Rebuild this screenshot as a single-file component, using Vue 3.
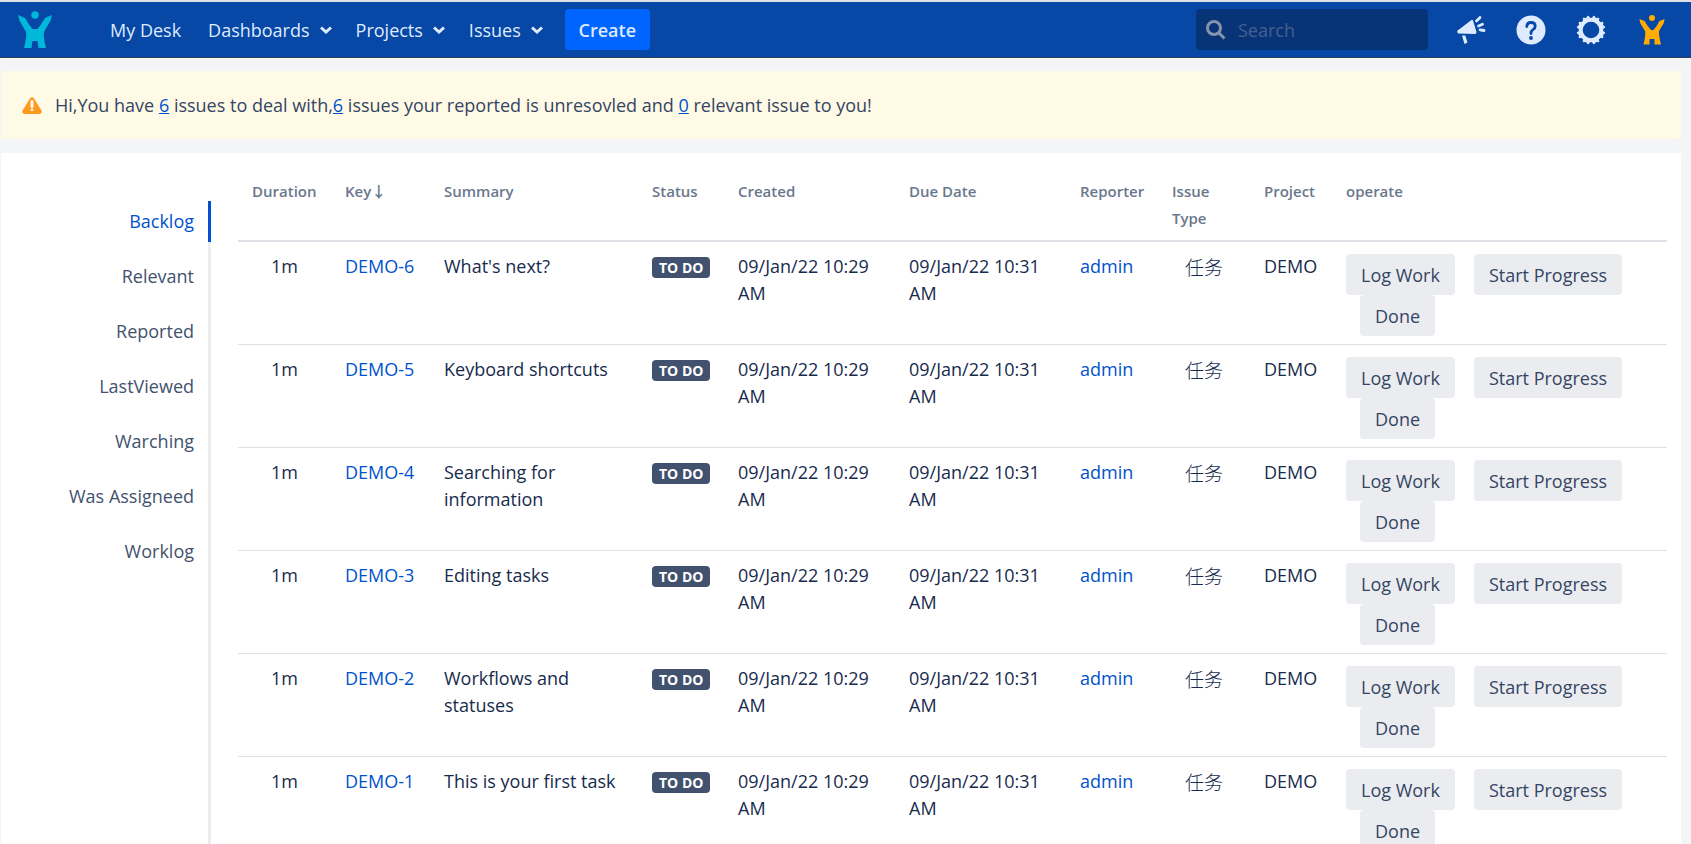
<script setup>
import { ref } from 'vue'

const search = ref('')
const menus = ['Dashboards', 'Projects', 'Issues']
const tabs = ['Backlog', 'Relevant', 'Reported', 'LastViewed', 'Warching', 'Was Assigneed', 'Worklog']
const activeTab = ref('Backlog')

const columns = [
  { key: 'duration', label: 'Duration' },
  { key: 'key', label: 'Key↓' },
  { key: 'summary', label: 'Summary' },
  { key: 'status', label: 'Status' },
  { key: 'created', label: 'Created' },
  { key: 'due', label: 'Due Date' },
  { key: 'reporter', label: 'Reporter' },
  { key: 'type', label: 'Issue Type' },
  { key: 'project', label: 'Project' },
  { key: 'operate', label: 'operate' },
]

const issues = [
  { key: 'DEMO-6', summary: "What's next?" },
  { key: 'DEMO-5', summary: 'Keyboard shortcuts' },
  { key: 'DEMO-4', summary: 'Searching for information' },
  { key: 'DEMO-3', summary: 'Editing tasks' },
  { key: 'DEMO-2', summary: 'Workflows and statuses' },
  { key: 'DEMO-1', summary: 'This is your first task' },
]
</script>

<template>
  <div class="page">
    <header class="topbar">
      <a class="logo" href="#" aria-label="Home">
        <svg viewBox="0 0 34 38" width="34" height="38">
          <circle cx="17" cy="4" r="3.700" />
          <path d="M0 4 L7 7 Q11 14 14.500 18 H19.500 Q23 14 27 7 L34 4 Q33 10 30 14 L26 21 Q25 25 28 37 H20.500 L19.500 30 H14.500 L13.500 37 H6 Q9 25 8 21 L4 14 Q1 10 0 4Z" />
        </svg>
      </a>
      <nav class="menu" aria-label="Main">
        <a href="#">My Desk</a>
        <button v-for="m in menus" :key="m" type="button" class="drop">
          {{ m }}
          <svg viewBox="0 0 12 8" width="12" height="8"><path d="M1 1.500 L6 6 L11 1.500" /></svg>
        </button>
      </nav>
      <button type="button" class="create">Create</button>
      <div class="search">
        <svg viewBox="0 0 20 20" width="20" height="20"><circle cx="8" cy="8" r="6.500" /><path d="M13 13 L18.500 18.500" /></svg>
        <input v-model="search" type="text" placeholder="Search" aria-label="Search">
      </div>
      <div class="tools">
        <button type="button" aria-label="Feedback">
          <svg viewBox="0 0 30 30" width="30" height="30">
            <path class="fill" d="M15.500 5 Q16.500 4.500 17 5.500 L20.500 17 Q20.500 19 19 19 L3 18.500 Q0.500 18 1.500 15.500 Q2 15 3 14.500Z" />
            <path class="fill" d="M6 20.500 H9.300 L11.500 27.500 L8.500 29Z" />
            <path class="ray" d="M20.500 6 L24 2.500 M22.500 11 L26.500 9.300 M24 14.800 L28 15.500" />
          </svg>
        </button>
        <button type="button" aria-label="Help">
          <svg viewBox="0 0 30 30" width="30" height="30">
            <circle class="fill" cx="15" cy="15" r="14.500" />
            <path class="mark" d="M10.800 11.500 Q11 7.500 15 7.500 Q19.200 7.500 19.200 11.300 Q19.200 13.300 17 14.600 Q15 15.800 15 18.500" />
            <circle class="dot" cx="15" cy="23" r="1.900" />
          </svg>
        </button>
        <button type="button" aria-label="Settings">
          <svg viewBox="0 0 30 30" width="30" height="30">
            <circle class="ring" cx="15" cy="15" r="10.300" />
            <g class="fill">
              <path v-for="n in 8" :key="n" d="M11 5 L11.700 1.200 Q12 0.500 13 0.800 L15 2 L17 0.800 Q18 0.500 18.300 1.200 L19 5Z" :transform="`rotate(${n * 45 + 22.5} 15 15)`" />
            </g>
          </svg>
        </button>
        <button type="button" class="profile" aria-label="Profile">
          <svg viewBox="0 0 26 30" width="26" height="30">
            <circle cx="13" cy="3" r="3" />
            <path d="M0.500 4 L5.500 6 Q9 12 12 15 H14.500 Q17.500 12 20.500 6 L25.500 4 Q25.500 8 23 11 L20 16 Q19.500 20 22 29.500 H15.500 V24 H10.500 V29.500 H4.500 Q7 20 6 16 L3 11 Q0.500 8 0.500 4Z" />
          </svg>
        </button>
      </div>
    </header>

    <main>
      <div class="notice" role="status">
        <svg viewBox="0 0 20 17" width="20" height="17">
          <path class="tri" d="M8 1.500 Q10 -1 12 1.500 L19.500 13.500 Q20.500 16.500 17.500 17 H2.500 Q-0.500 16.500 0.500 13.500Z" />
          <path class="bang" d="M10 4.500 V9.500" /><circle class="bang-dot" cx="10" cy="12.800" r="1.400" />
        </svg>
        <p>Hi,You have <a href="#">6</a> issues to deal with,<a href="#">6</a> issues your reported is unresovled and <a href="#">0</a> relevant issue to you!</p>
      </div>

      <section class="card">
        <nav class="tabs" aria-label="Issue lists">
          <a v-for="t in tabs" :key="t" href="#" :class="{ active: t === activeTab }" @click.prevent="activeTab = t">{{ t }}</a>
        </nav>
        <div class="content">
          <table>
            <colgroup><col v-for="c in columns" :key="c.key" :class="'w-' + c.key"></colgroup>
            <thead>
              <tr><th v-for="c in columns" :key="c.key" scope="col">{{ c.label }}</th></tr>
            </thead>
            <tbody>
              <tr v-for="i in issues" :key="i.key">
                <td class="center">1m</td>
                <td class="key"><a href="#">{{ i.key }}</a></td>
                <td>{{ i.summary }}</td>
                <td><span class="badge">TO DO</span></td>
                <td>09/Jan/22 10:29 AM</td>
                <td>09/Jan/22 10:31 AM</td>
                <td><a href="#">admin</a></td>
                <td class="type">任务</td>
                <td>DEMO</td>
                <td class="ops">
                  <div class="actions">
                    <button type="button">Log Work</button>
                    <button type="button">Start Progress</button>
                    <button type="button" class="done">Done</button>
                  </div>
                </td>
              </tr>
            </tbody>
          </table>
        </div>
      </section>
    </main>
  </div>
</template>

<style>
html { background: #f4f5f7; }
body { margin: 0; overflow: hidden; }
</style>

<style scoped>
.page {
  display: flex;
  flex-direction: column;
  height: 100vh;
  overflow: hidden;
  box-sizing: border-box;
  border-top: 2px solid #dfe1e6;
  background: #f4f5f7;
  color: #172b4d;
  font-family: "Open Sans", "Noto Sans", "Noto Sans CJK SC", sans-serif;
  font-size: 18px;
  line-height: 27px;
}
button, input { font: inherit; border: 0; padding: 0; margin: 0; }
button { cursor: pointer; }
a { color: #0052cc; text-decoration: none; }
.topbar {
  display: flex;
  flex: none;
  align-items: center;
  height: 55px;
  padding: 0 26px 0 18px;
  background: #0747a6;
  border-bottom: 1px solid #2e3d54;
}
.logo { display: flex; fill: #00b8d9; margin-right: 58px; }
.menu { display: flex; gap: 24px; padding-top: 2px; }
.menu a, .drop { color: #deebff; white-space: nowrap; }
.menu a { margin-right: 3px; }
.drop { display: flex; align-items: center; gap: 10px; background: none; }
.drop svg { margin-bottom: 2px; fill: none; stroke: #deebff; stroke-width: 3; }
.create {
  height: 41px;
  width: 85px;
  padding-top: 2px;
  margin-left: 22px;
  border-radius: 4px;
  background: #0065ff;
  color: #deebff;
  font-weight: 600;
}
.search {
  display: flex;
  align-items: center;
  gap: 12px;
  box-sizing: border-box;
  width: 232px;
  height: 41px;
  padding: 0 10px;
  margin-left: auto;
  border-radius: 4px;
  background: #083377;
}
.search svg { flex: none; fill: none; stroke: #8493ae; stroke-width: 3; }
.search input { flex: 1; min-width: 0; padding-top: 2px; background: none; color: #deebff; outline: none; }
.search input::placeholder { color: #45608f; opacity: 1; }
.tools { display: flex; align-items: center; gap: 30px; margin-left: 28px; }
.tools button { display: flex; background: none; }
.fill { fill: #deebff; }
.ray { fill: none; stroke: #deebff; stroke-width: 2.800; stroke-linecap: round; }
.mark { fill: none; stroke: #0747a6; stroke-width: 2.800; stroke-linecap: round; }
.dot { fill: #0747a6; }
.ring { fill: none; stroke: #deebff; stroke-width: 4; }
.tools .profile { margin-left: 3px; fill: #ffab00; }
main { display: flex; flex-direction: column; flex: 1; padding: 13px 10px 0 1px; }
.notice {
  display: flex;
  align-items: center;
  gap: 13px;
  padding: 20px 21px;
  border-radius: 4px;
  background: #fffae6;
  color: #344563;
}
.notice p { margin: 0; padding-top: 1px; }
.notice a { text-decoration: underline; }
.tri { fill: #ff991f; }
.bang { stroke: #fffae6; stroke-width: 3; stroke-linecap: round; }
.bang-dot { fill: #fffae6; }
.card {
  display: flex;
  flex: 1;
  margin-top: 14px;
  padding: 14px 14px 0 0;
  background: #fff;
}
.tabs {
  display: flex;
  flex-direction: column;
  gap: 14px;
  flex: none;
  width: 207px;
  margin-top: 34px;
  border-right: 3px solid #ebecf0;
}
.tabs a {
  margin-right: -3px;
  padding: 7px 14px;
  border-right: 3px solid transparent;
  color: #42526e;
  text-align: right;
}
.tabs a.active { color: #0052cc; border-color: #0052cc; }
.content { flex: 1; min-width: 0; padding-left: 27px; }
table { width: 100%; table-layout: fixed; border-collapse: collapse; }
.w-duration { width: 93px; }
.w-key { width: 99px; }
.w-summary { width: 208px; }
.w-status { width: 86px; }
.w-created, .w-due { width: 171px; }
.w-reporter, .w-type { width: 92px; }
.w-project { width: 82px; }
.w-operate { width: 335px; }
th {
  padding: 11px 12px 8px 14px;
  border-bottom: 2px solid #dfe1e6;
  color: #6b778c;
  font-size: 15px;
  font-weight: 600;
  text-align: left;
  vertical-align: top;
}
td { padding: 11px 14px 9px; border-bottom: 1px solid #dfe1e6; vertical-align: top; }
.center, .type { text-align: center; }
.type { font-family: "Noto Sans CJK SC", sans-serif; font-size: 19px; font-weight: 300; }
.key { white-space: nowrap; }
.badge {
  display: inline-block;
  padding: 0 7px;
  border-radius: 4px;
  background: #42526e;
  color: #fff;
  font-size: 14px;
  font-weight: 700;
  line-height: 21px;
  white-space: nowrap;
}
td.ops { padding: 12px 14px 8px; }
.actions { display: flex; flex-wrap: wrap; column-gap: 19px; }
.actions button {
  height: 41px;
  padding: 2px 15px 0;
  border-radius: 4px;
  background: #ebecf0;
  color: #344563;
  white-space: nowrap;
}
.actions .done { margin-left: 14px; }
</style>
